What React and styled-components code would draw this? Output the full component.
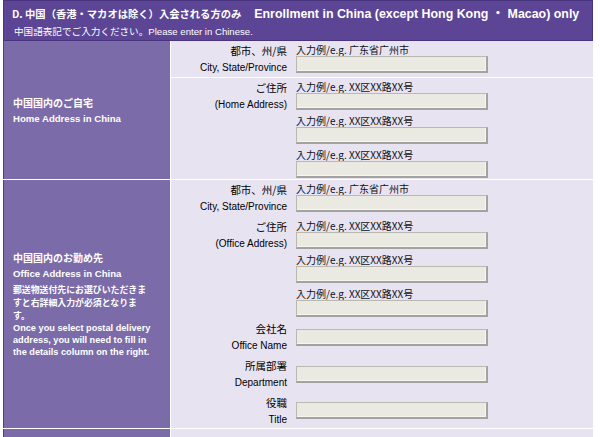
import React from "react";
import styled, { createGlobalStyle } from "styled-components";

const GlobalStyle = createGlobalStyle`
  html, body { margin: 0; padding: 0; background: #ffffff; }
  body {
    font-family: "Liberation Sans", "Noto Sans CJK JP", sans-serif;
    color: #000;
  }
  * { box-sizing: border-box; }
`;

const Frame = styled.div`
  margin-left: 3px;
  width: 590px;
  display: flex;
  flex-direction: column;
`;

const Header = styled.div`
  height: 41px;
  background: #5b4594;
  border: 1px solid #48347f;
  color: #fff;
  padding: 5px 0 0 8px;
`;

const Title = styled.div`
  display: flex;
  align-items: baseline;
  white-space: nowrap;
  font-weight: bold;
  line-height: 16px;
`;

const TitleJa = styled.span`
  font-family: "Noto Sans CJK JP", sans-serif;
  font-size: 10.3px;
`;

const TitleEn = styled.span`
  font-family: "Liberation Sans", "Noto Sans CJK JP", sans-serif;
  font-size: 12.4px;
  margin-left: 13px;
`;

const Sub = styled.div`
  font-size: 9.6px;
  line-height: 14px;
  margin-top: 3px;
  padding-left: 2px;
  white-space: nowrap;
`;

const Sections = styled.div`
  display: flex;
  flex-direction: column;
  gap: 1px;
  background: #ffffff;
`;

const Section = styled.div`
  display: grid;
  grid-template-columns: 167px 1fr;
  column-gap: 1px;
  background: #ffffff;
`;

const Side = styled.div`
  background: #7b6ba9;
  border-left: 1px solid #4f3d8b;
  color: #fff;
  font-weight: bold;
  padding: 0 6px 0 9px;
  display: flex;
  flex-direction: column;
  justify-content: center;
  white-space: nowrap;
`;

const SideTitle = styled.div`
  font-family: "Noto Sans CJK JP", sans-serif;
  font-size: 10px;
  line-height: 15px;
  margin-bottom: 3px;
`;

const SideEn = styled.div`
  font-size: 9.6px;
  line-height: 12px;
  margin-bottom: ${(p) => (p.$last ? "0" : "3px")};
`;

const SideNoteJa = styled.div`
  font-family: "Noto Sans CJK JP", sans-serif;
  font-size: 8.9px;
  line-height: 13px;
`;

const SideNoteEn = styled.div`
  font-size: 9.2px;
  line-height: 12px;
`;

const Rows = styled.div`
  display: flex;
  flex-direction: column;
  gap: 1px;
  background: ${(p) => (p.$divided ? "#ffffff" : "#e7e3f1")};
`;

const FieldRow = styled.div`
  display: grid;
  grid-template-columns: 121px 1fr;
  background: #e7e3f1;
  height: ${(p) => p.$h}px;
`;

const Label = styled.div`
  text-align: right;
  padding-right: 5px;
  padding-top: ${(p) => p.$pt || 0}px;
  white-space: nowrap;
`;

const LabelJa = styled.div`
  font-family: "Noto Sans CJK JP", sans-serif;
  font-size: 10.5px;
  line-height: 17px;
`;

const LabelEn = styled.div`
  font-size: 10px;
  line-height: 17px;
`;

const InputCell = styled.div`
  padding-left: 4px;
  padding-top: ${(p) => (p.$center ? 0 : 2)}px;
  display: flex;
  flex-direction: column;
  align-items: flex-start;
  justify-content: ${(p) => (p.$center ? "center" : "flex-start")};
  gap: 4px;
`;

const Group = styled.div`
  display: flex;
  flex-direction: column;
`;

const Hint = styled.div`
  font-family: "Noto Sans CJK JP", sans-serif;
  font-size: 10px;
  line-height: 13px;
  white-space: nowrap;
  color: #111;
`;

const TextBox = styled.input`
  display: block;
  width: 192px;
  height: 17px;
  margin: 0;
  padding: 0 3px;
  background: #ebeae2;
  border-style: solid;
  border-width: 1px 2px 2px 1px;
  border-color: #b9b8b1 #a2a2a0 #a2a2a0 #b9b8b1;
  box-shadow: inset -1px -1px 0 #f7f7f2;
  outline: none;
  font-size: 10px;
`;

const HINT_CITY = "入力例/e.g. 广东省广州市";
const HINT_ADDR = "入力例/e.g. XX区XX路XX号";

function HintedInput({ hint }) {
  return (
    <Group>
      <Hint>{hint}</Hint>
      <TextBox type="text" />
    </Group>
  );
}

function CityRow() {
  return (
    <FieldRow $h={36}>
      <Label $pt={1}>
        <LabelJa>都市、州/県</LabelJa>
        <LabelEn>City, State/Province</LabelEn>
      </Label>
      <InputCell>
        <HintedInput hint={HINT_CITY} />
      </InputCell>
    </FieldRow>
  );
}

function AddressRow({ en, h }) {
  return (
    <FieldRow $h={h}>
      <Label $pt={1}>
        <LabelJa>ご住所</LabelJa>
        <LabelEn>{en}</LabelEn>
      </Label>
      <InputCell>
        <HintedInput hint={HINT_ADDR} />
        <HintedInput hint={HINT_ADDR} />
        <HintedInput hint={HINT_ADDR} />
      </InputCell>
    </FieldRow>
  );
}

function PlainRow({ ja, en, h }) {
  return (
    <FieldRow $h={h}>
      <Label $pt={1}>
        <LabelJa>{ja}</LabelJa>
        <LabelEn>{en}</LabelEn>
      </Label>
      <InputCell $center>
        <TextBox type="text" />
      </InputCell>
    </FieldRow>
  );
}

export default function App() {
  return (
    <>
      <GlobalStyle />
      <Frame>
        <Header>
          <Title>
            <TitleJa>D. 中国（香港・マカオは除く）入会される方のみ</TitleJa>
            <TitleEn>Enrollment in China (except Hong Kong ・ Macao) only</TitleEn>
          </Title>
          <Sub>中国語表記でご入力ください。Please enter in Chinese.</Sub>
        </Header>
        <Sections>
          <Section>
            <Side>
              <SideTitle>中国国内のご自宅</SideTitle>
              <SideEn $last>Home Address in China</SideEn>
            </Side>
            <Rows $divided>
              <CityRow />
              <AddressRow en="(Home Address)" h={101} />
            </Rows>
          </Section>
          <Section>
            <Side>
              <SideTitle>中国国内のお勤め先</SideTitle>
              <SideEn>Office Address in China</SideEn>
              <SideNoteJa>
                郵送物送付先にお選びいただきま
                <br />
                すと右詳細入力が必須となりま
                <br />
                す。
              </SideNoteJa>
              <SideNoteEn>
                Once you select postal delivery
                <br />
                address, you will need to fill in
                <br />
                the details column on the right.
              </SideNoteEn>
            </Side>
            <Rows>
              <CityRow />
              <AddressRow en="(Office Address)" h={101} />
              <PlainRow ja="会社名" en="Office Name" h={36} />
              <PlainRow ja="所属部署" en="Department" h={36} />
              <PlainRow ja="役職" en="Title" h={35} />
            </Rows>
          </Section>
          <Section>
            <Side />
            <Rows>
              <FieldRow $h={40} />
            </Rows>
          </Section>
        </Sections>
      </Frame>
    </>
  );
}
